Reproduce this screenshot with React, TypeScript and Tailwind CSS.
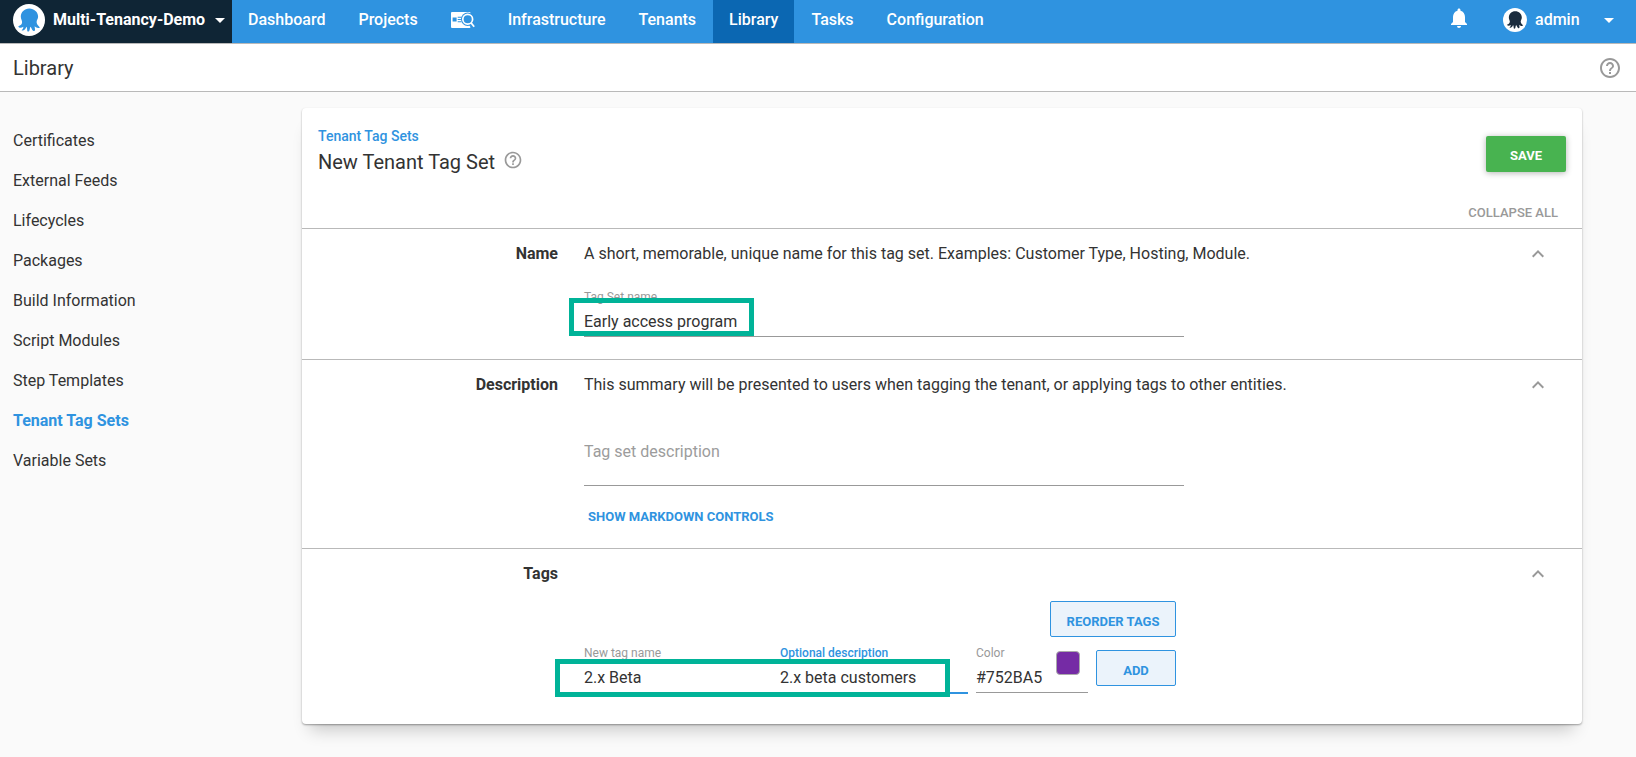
import type { ReactNode } from "react";
import { MdArrowDropDown, MdExpandLess, MdHelpOutline, MdNotifications } from "react-icons/md";

const sideLinks = [
  "Certificates",
  "External Feeds",
  "Lifecycles",
  "Packages",
  "Build Information",
  "Script Modules",
  "Step Templates",
  "Tenant Tag Sets",
  "Variable Sets",
];

function Octopus({ className }: { className: string }) {
  return (
    <svg viewBox="0 0 32 32" className={className} aria-hidden="true">
      <circle cx="16" cy="16" r="16" fill="#fff" />
      <path
        fill="currentColor"
        d="M16.300 4.400C11.400 4.400 7.800 8 7.800 12.600c0 2.400 1.200 3.900 1.300 5.500.1 2.200-1.500 3.400-3.900 4.300.7 1.400 3.100 1.700 5.100.4.200 1.500-.6 2.600-1.700 3.400 1.800.9 3.900-.8 4.800-3.500.9 1 .7 2.700.9 4.400.1.700 1.500.7 1.900-.1.700-1.300.5-3 1.300-4.300 1.100 1.100 1.300 3 2.600 4.100.700.600 1.800.200 1.900-.7.2-1.300-.4-2.500-.3-3.900 1.500 1.300 3.300 2.400 5.200 1.200-.9-1.500-3.200-2.500-3.300-5.200-.1-1.900 1.500-3.100 1.500-5.600 0-4.600-3.900-8.200-8.800-8.200z"
      />
    </svg>
  );
}

function InsightsIcon() {
  return (
    <svg viewBox="0 0 24 16" className="h-4 w-6" role="img" aria-label="Search">
      <path fill="#fff" d="M1 0h17.500a1 1 0 0 1 1 1v14a1 1 0 0 1-1 1H1a1 1 0 0 1-1-1V1a1 1 0 0 1 1-1z" />
      <path fill="#2f93e0" d="M1.600 5.400h4v4h-4zM6.700 4.800h3.600v1H6.700zM6.700 7h3.200v1H6.700zM6.700 9.200h3.600v1H6.700z" />
      <circle cx="16.700" cy="7.300" r="6.700" fill="#2f93e0" />
      <circle cx="16.700" cy="7.300" r="4.900" fill="#2f93e0" stroke="#fff" strokeWidth="1.700" />
      <path d="M18.700 12.800l2 2.700" stroke="#2f93e0" strokeWidth="1.200" />
      <path d="M20 10.800l3.200 4" stroke="#fff" strokeWidth="1.800" />
    </svg>
  );
}

function NavItem({ children, active = false }: { children: ReactNode; active?: boolean }) {
  return (
    <a href="#" className={`flex items-center px-4 pb-1 ${active ? "bg-[#0b67b2]" : ""}`}>
      {children}
    </a>
  );
}

function Section({ title, summary, last = false, children }: { title: string; summary?: string; last?: boolean; children: ReactNode }) {
  return (
    <section
      className={`grid grid-cols-[256px_minmax(0,1fr)_auto] pt-[13px] pr-8 ${last ? "" : "border-b border-[#b9b9b9]"}`}
    >
      <h2 className="text-right font-bold">{title}</h2>
      <div className="pl-[26px]">
        <p className="min-h-6">{summary}</p>
        <div className="max-w-[600px]">{children}</div>
      </div>
      <button type="button" aria-label={`Collapse ${title}`} className="self-start text-[#999]">
        <MdExpandLess size={24} />
      </button>
    </section>
  );
}

const labelClass = "block text-xs leading-5";
const inputClass = "block h-[30px] w-full border-b border-[#999] bg-transparent outline-none";

export default function App() {
  return (
    <div className="min-h-screen bg-[#fafafa] font-['Roboto',sans-serif] text-base leading-6 text-[#333]">
      <header className="flex h-11 border-b border-[#b9b9b9] bg-[#2f93e0] font-medium text-white">
        <button type="button" className="flex w-[232px] items-center bg-[#0f2535] pb-[3px] pl-[13px]">
          <Octopus className="mr-2 size-8 shrink-0 text-[#2f93e0]" />
          <span className="grow text-left font-bold whitespace-nowrap">Multi-Tenancy-Demo</span>
          <MdArrowDropDown size={24} className="shrink-0" />
        </button>
        <nav className="flex gap-px">
          <NavItem>Dashboard</NavItem>
          <NavItem>Projects</NavItem>
          <NavItem><InsightsIcon /></NavItem>
          <NavItem>Infrastructure</NavItem>
          <NavItem>Tenants</NavItem>
          <NavItem active>Library</NavItem>
          <NavItem>Tasks</NavItem>
          <NavItem>Configuration</NavItem>
        </nav>
        <div className="ml-auto flex items-center pr-[15px] pb-1">
          <button type="button" aria-label="Notifications" className="mr-8 pb-1">
            <MdNotifications size={24} />
          </button>
          <button type="button" className="flex w-[118px] items-center">
            <Octopus className="mr-2 size-6 text-[#1b2c3d]" />
            <span>admin</span>
            <MdArrowDropDown size={24} className="ml-auto" />
          </button>
        </div>
      </header>

      <div className="flex h-12 items-center justify-between border-b border-[#b9b9b9] bg-white pr-[14px] pl-[13px]">
        <h1 className="text-xl">Library</h1>
        <button type="button" aria-label="Help" className="text-[#999]">
          <MdHelpOutline size={24} />
        </button>
      </div>

      <div className="flex pb-8">
        <nav className="w-[302px] shrink-0 pt-[29px] pl-[13px]">
          {sideLinks.map((text) => (
            <a
              key={text}
              href="#"
              className={`flex h-10 items-center ${text === "Tenant Tag Sets" ? "font-bold text-[#2f93e0]" : ""}`}
            >
              {text}
            </a>
          ))}
        </nav>

        <main className="mt-4 mr-[54px] min-w-0 grow rounded bg-white shadow-[0_1px_2px_rgba(0,0,0,0.35),0_14px_16px_-8px_rgba(0,0,0,0.2)]">
          <div className="border-b border-[#b9b9b9] px-4 pt-[18px] pb-[5px]">
            <div className="flex items-start justify-between">
              <div>
                <a href="#" className="block text-sm leading-5 font-medium text-[#2f93e0]">Tenant Tag Sets</a>
                <div className="mt-1 flex h-6 items-start gap-2">
                  <h2 className="text-xl leading-6">New Tenant Tag Set</h2>
                  <MdHelpOutline size={20} className="text-[#999]" />
                </div>
              </div>
              <button
                type="button"
                className="mt-[10px] h-9 w-20 rounded-xs bg-[#48b350] pt-1 text-[13px] font-bold text-white shadow-[0_1px_6px_rgba(0,0,0,0.3)]"
              >
                SAVE
              </button>
            </div>
            <div className="mt-[29px] flex justify-end pr-2">
              <button type="button" className="text-[13px] leading-5 font-medium text-[#999]">COLLAPSE ALL</button>
            </div>
          </div>

          <Section title="Name" summary="A short, memorable, unique name for this tag set. Examples: Customer Type, Hosting, Module.">
            <div className="relative mt-[21px] mb-[22px]">
              <label htmlFor="set-name" className={`${labelClass} text-[#999]`}>Tag Set name</label>
              <input id="set-name" className={inputClass} defaultValue="Early access program" />
              <div className="pointer-events-none absolute top-[11px] -left-[15px] h-[38px] w-[185px] border-5 border-[#00b398]" />
            </div>
          </Section>

          <Section title="Description" summary="This summary will be presented to users when tagging the tenant, or applying tags to other entities.">
            <textarea
              aria-label="Tag set description"
              placeholder="Tag set description"
              rows={1}
              className="mt-[43px] block h-[46px] w-full resize-none border-b border-[#999] bg-transparent outline-none placeholder:text-[#9c9c9c]"
            />
            <button type="button" className="mt-[13px] mb-[13px] h-9 px-1 text-[13px] font-bold text-[#2f93e0]">
              SHOW MARKDOWN CONTROLS
            </button>
          </Section>

          <Section title="Tags" last>
            <div className="mt-[15px] flex justify-end pr-2">
              <button
                type="button"
                className="h-9 w-[126px] rounded-xs border border-[#2f93e0] bg-[#ebf3fb] pt-[6px] text-[13px] font-bold text-[#2f93e0]"
              >
                REORDER TAGS
              </button>
            </div>
            <div className="relative mt-[6px] mb-[30px] flex gap-2 pr-2">
              <div className="w-[188px]">
                <label htmlFor="tag-name" className={`${labelClass} text-[#999]`}>New tag name</label>
                <input id="tag-name" className={inputClass} defaultValue="2.x Beta" />
              </div>
              <div className="w-[188px]">
                <label htmlFor="tag-description" className={`${labelClass} font-medium text-[#2f93e0]`}>Optional description</label>
                <input
                  id="tag-description"
                  className="block h-[31px] w-full border-b-2 border-[#2f93e0] bg-transparent outline-none"
                  defaultValue="2.x beta customers"
                />
              </div>
              <div className="relative w-28">
                <label htmlFor="tag-color" className={`${labelClass} text-[#999]`}>Color</label>
                <input id="tag-color" className={inputClass} defaultValue="#752BA5" />
                <button
                  type="button"
                  aria-label="Pick color"
                  className="absolute top-2 right-2 size-6 rounded border border-[#aaa] bg-[#752ba5]"
                />
              </div>
              <button
                type="button"
                className="mt-[7px] h-9 w-20 rounded-xs border border-[#2f93e0] bg-[#ebf3fb] pt-[6px] text-[13px] font-bold text-[#2f93e0]"
              >
                ADD
              </button>
              <div className="pointer-events-none absolute top-4 -left-[29px] h-[38px] w-[395px] border-5 border-[#00b398]" />
            </div>
          </Section>
        </main>
      </div>
    </div>
  );
}
